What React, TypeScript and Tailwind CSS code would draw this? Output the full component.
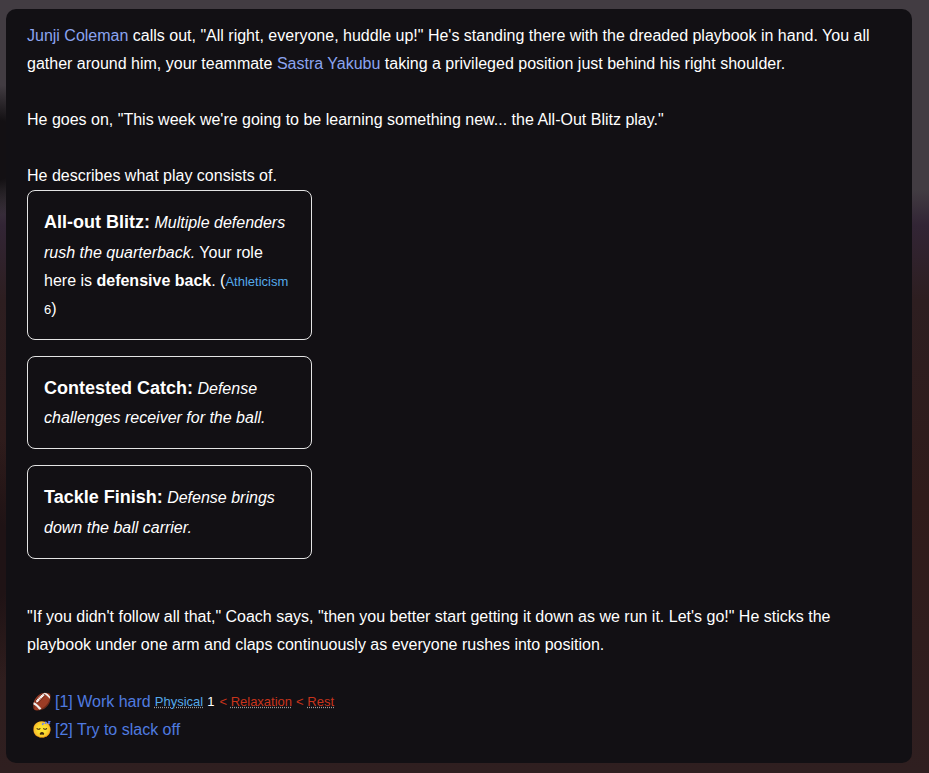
const sans = { fontFamily: '"Liberation Sans", Arial, sans-serif' };
const emoji = { fontFamily: '"Noto Color Emoji", sans-serif' };

function Name({ children }: { children: string }) {
  return <span className="text-[#8ba4f0]">{children}</span>;
}

function PlayCard({ title, desc, children }: { title: string; desc: string; children?: React.ReactNode }) {
  return (
    <div className="w-[285px] rounded-lg border border-[#e4e4e4] p-4 text-[16px] leading-[1.75] text-white">
      <b className="text-[18px]">{title}:</b> <i>{desc}</i>
      {children}
    </div>
  );
}

export default function App() {
  return (
    <div
      className="h-[773px] w-[929px] overflow-hidden bg-[radial-gradient(ellipse_40px_65px_at_0px_150px,#131013_45%,transparent_100%),radial-gradient(ellipse_30px_120px_at_0px_560px,#1f1315_30%,transparent_100%),linear-gradient(to_bottom,#423c42_0px,#423c42_190px,#322535_225px,#2d1e20_300px,#2f1b1a_500px,#2f1f20_100%)] pb-[10px] pl-[6px] pr-[17px] pt-[9px]"
      style={sans}
    >
      <div className="h-[754px] w-[906px] rounded-[10px] bg-[#121014] pl-[21px] pr-[20px] pt-[13px] text-[16px] leading-[28px] text-white">
        <p>
          <Name>Junji Coleman</Name> calls out, "All right, everyone, huddle up!" He's standing there with the dreaded playbook in hand. You all gather around him, your teammate <Name>Sastra Yakubu</Name> taking a privileged position just behind his right shoulder.
        </p>
        <p className="mt-7">He goes on, "This week we're going to be learning something new... the All-Out Blitz play."</p>
        <p className="mt-7">He describes what play consists of.</p>
        <div className="flex flex-col gap-4">
          <PlayCard title="All-out Blitz" desc="Multiple defenders rush the quarterback.">
            {' '}Your role here is <b>defensive back</b>. (<span className="text-[13px] text-[#55aaea]">Athleticism</span> <span className="text-[13px]">6</span>)
          </PlayCard>
          <PlayCard title="Contested Catch" desc="Defense challenges receiver for the ball." />
          <PlayCard title="Tackle Finish" desc="Defense brings down the ball carrier." />
        </div>
        <p className="mt-[44px]">"If you didn't follow all that," Coach says, "then you better start getting it down as we run it. Let's go!" He sticks the playbook under one arm and claps continuously as everyone rushes into position.</p>
        <div className="mt-[29px] pl-[5px]">
          <div className="flex items-center">
            <span className="w-[23px] text-[16px]" style={emoji}>🏈</span>
            <span className="text-[#4f7be0]">[1] Work hard</span>
            <span className="ml-[4px] text-[13px] text-[#55aaea] underline decoration-dotted decoration-[#999]">Physical</span>
            <span className="ml-[4px] text-[13px] text-white">1</span>
            <span className="ml-[5px] text-[13px] text-[#c8341c]">&lt; <span className="underline decoration-dotted decoration-[#999]">Relaxation</span></span>
            <span className="ml-[4px] text-[13px] text-[#c8341c]">&lt; <span className="underline decoration-dotted decoration-[#999]">Rest</span></span>
          </div>
          <div className="flex items-center">
            <span className="w-[23px] text-[16px]" style={emoji}>😴</span>
            <span className="text-[#4f7be0]">[2] Try to slack off</span>
          </div>
        </div>
      </div>
    </div>
  );
}
